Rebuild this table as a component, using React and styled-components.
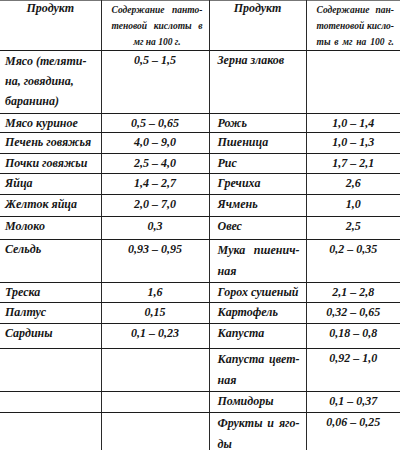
import styled, { createGlobalStyle } from "styled-components";

const GlobalStyle = createGlobalStyle`
  html, body {
    margin: 0;
    padding: 0;
    background: #fff;
  }
  body {
    width: 400px;
    height: 450px;
    overflow: hidden;
  }
`;

const Table = styled.table`
  width: 400px;
  table-layout: fixed;
  border-collapse: collapse;
  border-top: 1px solid #777;
  font-family: "Liberation Serif", "DejaVu Serif", serif;
  font-style: italic;
  font-weight: bold;
  color: #161616;
`;

const Row = styled.tr`
  height: ${(p) => p.$h}px;
`;

const HeadCell = styled.th`
  padding: ${(p) => (p.$small ? "1px 6px 0 10px" : "0 4px")};
  vertical-align: top;
  text-align: center;
  border-bottom: 1px solid #1c1c1c;
  border-right: ${(p) => (p.$last ? "none" : "1px solid #2a2a2a")};
  font-size: ${(p) => (p.$small ? "9.5px" : "12px")};
  line-height: ${(p) => (p.$small ? "16px" : "15px")};
  font-weight: bold;
`;

const Cell = styled.td`
  padding: 0 ${(p) => (p.$value ? "4px" : "6px")} 0
    ${(p) => (p.$value ? "4px" : p.$right ? "8px" : "5px")};
  vertical-align: top;
  text-align: ${(p) => (p.$value ? "center" : "left")};
  border-bottom: 1px solid #1c1c1c;
  border-right: ${(p) => (p.$last ? "none" : "1px solid #2a2a2a")};
  font-size: 12px;
  line-height: 18px;
  white-space: nowrap;
`;

const Line = styled.span`
  display: block;
  line-height: ${(p) => (p.$lh ? `${p.$lh}px` : "inherit")};
  text-align: ${(p) => p.$align || "inherit"};
  text-align-last: ${(p) => p.$align || "auto"};
`;

// justify: stretch every line but the last (hyphenated wraps in the source)
const Text = ({ lines, justify = false, last = "left", lh }) =>
  lines.map((t, i) => (
    <Line
      key={i}
      $lh={lh}
      $align={justify && i < lines.length - 1 ? "justify" : last}
    >
      {t}
    </Line>
  ));

const rows = [
  { h: 63, a: ["Мясо (теляти-", "на, говядина,", "баранина)"], av: "0,5 – 1,5", b: ["Зерна злаков"], bv: "" },
  { h: 19, a: ["Мясо куриное"], av: "0,5 – 0,65", b: ["Рожь"], bv: "1,0 – 1,4" },
  { h: 21, a: ["Печень говяжья"], av: "4,0 – 9,0", b: ["Пшеница"], bv: "1,0 – 1,3" },
  { h: 20, a: ["Почки говяжьи"], av: "2,5 – 4,0", b: ["Рис"], bv: "1,7 – 2,1" },
  { h: 21, a: ["Яйца"], av: "1,4 – 2,7", b: ["Гречиха"], bv: "2,6" },
  { h: 22, a: ["Желток яйца"], av: "2,0 – 7,0", b: ["Ячмень"], bv: "1,0" },
  { h: 23, a: ["Молоко"], av: "0,3", b: ["Овес"], bv: "2,5" },
  { h: 43, a: ["Сельдь"], av: "0,93 – 0,95", b: ["Мука пшенич-", "ная"], bv: "0,2 – 0,35" },
  { h: 20, a: ["Треска"], av: "1,6", b: ["Горох сушеный"], bv: "2,1 – 2,8" },
  { h: 21, a: ["Палтус"], av: "0,15", b: ["Картофель"], bv: "0,32 – 0,65" },
  { h: 25, a: ["Сардины"], av: "0,1 – 0,23", b: ["Капуста"], bv: "0,18 – 0,8" },
  { h: 42, a: [], av: "", b: ["Капуста цвет-", "ная"], bv: "0,92 – 1,0" },
  { h: 21, a: [], av: "", b: ["Помидоры"], bv: "0,1 – 0,37" },
  { h: 45, a: [], av: "", b: ["Фрукты и яго-", "ды"], bv: "0,06 – 0,25" },
];

export default function App() {
  return (
    <>
      <GlobalStyle />
      <Table>
        <colgroup>
          <col style={{ width: 101 }} />
          <col style={{ width: 108 }} />
          <col style={{ width: 97 }} />
          <col style={{ width: 94 }} />
        </colgroup>
        <thead>
          <Row $h={50}>
            <HeadCell>Продукт</HeadCell>
            <HeadCell $small>
              <Text lines={["Содержание панто-", "теновой кислоты в", "мг на 100 г."]} justify last="center" />
            </HeadCell>
            <HeadCell>Продукт</HeadCell>
            <HeadCell $small $last>
              <Text lines={["Содержание пан-", "тотеновой кисло-", "ты в мг на 100 г."]} justify last="justify" />
            </HeadCell>
          </Row>
        </thead>
        <tbody>
          {rows.map((r, i) => (
            <Row key={i} $h={r.h}>
              <Cell>
                <Text lines={r.a} lh={r.a.length > 1 ? 20 : undefined} />
              </Cell>
              <Cell $value>{r.av}</Cell>
              <Cell $right>
                <Text lines={r.b} justify lh={r.b.length > 1 ? 21 : undefined} />
              </Cell>
              <Cell $value $last>
                {r.bv}
              </Cell>
            </Row>
          ))}
        </tbody>
      </Table>
    </>
  );
}
